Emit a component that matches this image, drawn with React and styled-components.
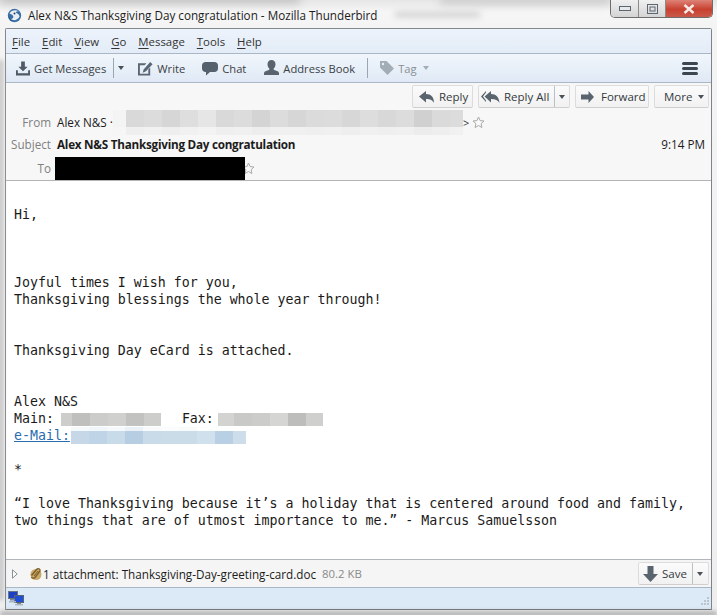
import React from "react";
import styled, { createGlobalStyle } from "styled-components";

const Global = createGlobalStyle`
  html, body { margin: 0; padding: 0; width: 717px; height: 615px; overflow: hidden; background: #f2f2f2; }
  #root { width: 717px; height: 615px; }
  * { box-sizing: border-box; }
  svg { flex: none; display: block; }
`;

const uiFont = `"Open Sans", "Noto Sans", "Liberation Sans", sans-serif`;

const Frame = styled.div`
  position: relative;
  width: 717px;
  height: 615px;
  overflow: hidden;
  display: flex;
  flex-direction: column;
  padding: 0 5px 5px 5px;
  background: linear-gradient(180deg, #e6e6e6 0, #f6f6f6 12px, #f4f4f4 28px, #eeeeee 100%);
  font-family: ${uiFont};
  color: #1e1e1e;
`;
const Smudge = styled.span`
  position: absolute;
  left: ${p => p.$x}px;
  top: ${p => p.$y}px;
  width: ${p => p.$w}px;
  height: ${p => p.$h}px;
  background: ${p => p.$c};
  filter: blur(${p => p.$b}px);
`;
const TitleBar = styled.div`
  position: relative;
  height: 28px;
  flex: none;
  display: flex;
  align-items: center;
  gap: 6px;
  padding: 2px 0 0 2px;
`;
const TitleText = styled.div`
  font-size: 11.7px;
  line-height: 17px;
  color: #1c1c1c;
  white-space: nowrap;
`;
const Controls = styled.div`
  position: absolute;
  right: -1px;
  top: 0;
  display: flex;
  height: 18px;
  border: 1px solid #6c6c6c;
  border-top: none;
  border-radius: 0 0 5px 5px;
  overflow: hidden;
`;
const Ctl = styled.div`
  width: ${p => p.$w}px;
  display: flex;
  align-items: center;
  justify-content: center;
  background: ${p => p.$bg};
  border-right: ${p => (p.$line ? "1px solid #8b8b8b" : "none")};
`;
const Window = styled.div`
  flex: 1;
  min-height: 0;
  display: flex;
  flex-direction: column;
  border: 1px solid #85898d;
  border-right-color: #7f8387;
  border-bottom-color: #60646a;
  border-radius: 2px 2px 0 0;
  background: #fff;
`;
const MenuBar = styled.div`
  height: 25px;
  flex: none;
  display: flex;
  align-items: center;
  padding-left: 6px;
  gap: 12px;
  background: linear-gradient(180deg, #edf3fb, #e3ecf7);
  border-bottom: 1px solid #a9b7c6;
  font-size: 11.4px;
`;
const MenuItem = styled.span`
  color: #333;
  u { text-underline-offset: 2px; text-decoration-thickness: 1px; }
`;
const Toolbar = styled.div`
  height: 29px;
  flex: none;
  display: flex;
  align-items: center;
  padding: 0 13px 0 9px;
  background: linear-gradient(180deg, #f1f6fc, #dfe9f5);
  border-bottom: 1px solid #a9b7c6;
  font-size: 11.2px;
  color: #3a3f45;
`;
const Tool = styled.div`
  display: flex;
  align-items: center;
  gap: 4px;
  margin-left: ${p => p.$ml || 0}px;
  color: ${p => (p.$dim ? "#8a8f95" : "#3a3f45")};
  white-space: nowrap;
`;
const Sep = styled.span`
  width: 1px;
  height: ${p => p.$h}px;
  background: #9aa7b3;
  margin-left: ${p => p.$ml}px;
  flex: none;
`;
const Caret = styled.span`
  width: 0;
  height: 0;
  flex: none;
  margin-left: ${p => p.$ml || 0}px;
  border-left: 3.5px solid transparent;
  border-right: 3.5px solid transparent;
  border-top: 4px solid ${p => p.$c || "#4a5158"};
`;
const Burger = styled.div`
  margin-left: auto;
  display: flex;
  flex-direction: column;
  gap: 2px;
  span { display: block; width: 16px; height: 3px; border-radius: 1.5px; background: #3c4650; }
`;
const Header = styled.div`
  height: 98px;
  flex: none;
  background: #f7f7f7;
  border-bottom: 1px solid #b4b4b4;
  position: relative;
`;
const Actions = styled.div`
  display: flex;
  justify-content: flex-end;
  gap: 5px;
  padding: 2px 2px 0 0;
  height: 26px;
`;
const Btn = styled.div`
  height: 23px;
  display: flex;
  align-items: center;
  width: ${p => p.$w}px;
  padding-left: ${p => p.$pl || 0}px;
  gap: ${p => p.$gap || 0}px;
  background: linear-gradient(180deg, #fbfbfb, #f1f1f1);
  border: 1px solid #dcdcdc;
  border-bottom-color: #cfcfcf;
  border-radius: 2px;
  font-size: 11.5px;
  color: #343a40;
  white-space: nowrap;
`;
const BtnSplit = styled.span`
  align-self: stretch;
  width: 1px;
  background: #b7c2c4;
  margin-left: ${p => p.$ml}px;
  flex: none;
`;
const MetaRow = styled.div`
  display: flex;
  align-items: center;
  height: ${p => p.$h}px;
  font-size: 11.7px;
  white-space: nowrap;
`;
const Label = styled.span`
  width: 45px;
  text-align: right;
  margin-right: 6px;
  padding-top: ${p => p.$pt || 0}px;
  color: #808080;
  flex: none;
`;
const Value = styled.span`
  font-weight: ${p => (p.$bold ? 700 : 400)};
  color: #1c1c1c;
  letter-spacing: ${p => (p.$bold ? "-0.25px" : "0")};
`;
const Time = styled.span`
  margin-left: auto;
  margin-right: 6px;
  color: #1c1c1c;
`;
const Cells = styled.span`
  display: flex;
  height: ${p => p.$h}px;
`;
const Cell = styled.span`
  display: block;
  height: 100%;
  width: ${p => p.$w}px;
  background: ${p => p.$c};
`;
const FromBlur = styled.div`
  position: absolute;
  left: 107px;
  top: 27px;
  display: flex;
  align-items: flex-start;
`;
const BlurStack = styled.div`
  display: flex;
  flex-direction: column;
`;
const FromTail = styled.div`
  display: flex;
  align-items: center;
  gap: 3px;
  height: 24px;
  font-size: 11px;
  color: #333;
`;
const Black = styled.div`
  width: 190px;
  height: 23px;
  margin: 3px 0 0 -2px;
  background: #000;
  flex: none;
  position: relative;
  z-index: 1;
`;
const ToStar = styled.span`
  margin-left: -3px;
  padding-top: 2px;
`;
const Body = styled.pre`
  flex: 1;
  min-height: 0;
  margin: 0;
  padding: 25px 0 0 8px;
  background: #fff;
  font-family: "DejaVu Sans Mono", "Liberation Mono", monospace;
  font-size: 13.28px;
  line-height: 17px;
  color: #1a1a1a;
  overflow: hidden;
`;
const BlurHolder = styled.span`
  display: inline-flex;
  flex-direction: column;
  vertical-align: top;
  height: 17px;
  padding-top: ${p => p.$pt || 0}px;
  margin-left: ${p => p.$ml || 0}px;
  margin-right: ${p => p.$mr || 0}px;
`;
const MailLink = styled.span`
  color: #2a6cb0;
  text-decoration: underline;
`;
const AttachBar = styled.div`
  height: 29px;
  flex: none;
  display: flex;
  align-items: center;
  padding: 0 2px 0 6px;
  background: #f5f5f5;
  border-top: 1px solid #b0b6bb;
  border-bottom: 1px solid #a9b7c6;
  font-size: 11.7px;
`;
const AttachSize = styled.span`
  color: #8a8a8a;
  margin-left: 6px;
  font-size: 11.4px;
`;
const SaveWrap = styled.div`
  margin-left: auto;
`;
const Status = styled.div`
  height: 21px;
  flex: none;
  display: flex;
  align-items: center;
  justify-content: space-between;
  padding: 0 0 0 2px;
  background: #dce9f6;
`;
const Grip = styled.div`
  align-self: flex-end;
  margin-bottom: 1px;
  margin-right: 1px;
  display: flex;
`;

const fromTop = ["#f4f4f4","#d9d9d9","#dcdcdc","#d6d6d6","#dedede","#e6e6e6","#d9d9d9","#dcdcdc","#d4d4d4","#dcdcdc","#d6d6d6","#dbdbdb","#dcdcdc","#d7d7d7","#dddddd","#d8d8d8","#dcdcdc","#d0d0d0","#dadada","#dcdcdc"];
const fromBottom = ["#f6f6f6","#efefef","#f1f1f1","#eeeeee","#f1f1f1","#f3f3f3","#efefef","#f0f0f0","#ededed","#f0f0f0","#f0f0f0","#efefef","#f0f0f0","#eeeeee","#f0f0f0","#efefef","#f0f0f0","#ececec","#eeeeee","#f1f1f1"];
const mainCells = ["#cdcdcb","#bfbfbd","#ccccca","#d0d0ce","#c2c2c0","#cdcdcb"];
const faxCells = ["#d3d3d1","#c9c9c7","#cccccb","#d5d5d3","#bdbdbb","#cfcfcd"];
const mailCells = ["#c6d8e8","#bfd4e6","#c8dbe9","#b7cee2","#c9dbe8","#cbdce9","#cbdce9","#d0e0ec","#b9d0e4","#cddeea"];
const mailFaint = ["#f6f9fc","#f1f6fa","#f6f9fc","#eaf1f7","#f8fafc","#fbfcfd","#f8fafc","#fdfefe","#fdfefe","#ffffff"];

function Blur({ colors, first, last, h }) {
  return (
    <Cells $h={h}>
      {colors.map((c, i) => (
        <Cell key={i} $c={c} $w={i === 0 ? first : i === colors.length - 1 ? last : 18} />
      ))}
    </Cells>
  );
}

const Bird = () => (
  <svg width="15" height="15" viewBox="0 0 18 17">
    <circle cx="9" cy="8.5" r="8" fill="#3a6ea5" />
    <path d="M3 6C5 2.5 10 1 14 3.5c-2 0-3 .6-3.5 1.6 2 .4 4 1.8 4.6 4.4-1.6 4.6-7.6 6.2-11 3C6 13 8 11.5 7.6 9.4 6.8 7.4 4.8 6.6 3 6z" fill="#e9eef3" />
    <circle cx="9" cy="6.2" r="1.2" fill="#23405f" />
    <path d="M2 9c1 3 3 5.5 6.5 6-3.5.6-7-2.5-6.5-6z" fill="#1f4c7e" />
  </svg>
);
const GetIcon = () => (
  <svg width="14" height="15" viewBox="0 0 15 15" fill="#4f5a66">
    <path d="M5.5 0h4v5.500h3L7.500 10.500 2.500 5.500h3z" />
    <path d="M0 9.500h2v3h11v-3h2V15H0z" />
  </svg>
);
const WriteIcon = () => (
  <svg width="15" height="15" viewBox="0 0 16 15" fill="#5a6672">
    <path d="M0 2h9L7 4H2v9h9V8.500l2-2V15H0z" />
    <path d="M13 .5l2.500 2.500-7 7.500L5 12l1-3.500z" />
  </svg>
);
const ChatIcon = () => (
  <svg width="16" height="15" viewBox="0 0 16 15" fill="#55626e">
    <path d="M3.500 1h9C14.500 1 16 2.300 16 4.500v3C16 9.700 14.500 11 12.500 11H8l-4 3.500V11h-.5C1.500 11 0 9.700 0 7.500v-3C0 2.300 1.500 1 3.500 1z" />
  </svg>
);
const BookIcon = () => (
  <svg width="15" height="16" viewBox="0 0 15 16" fill="#59646f">
    <path d="M7.500 0C10 0 11.500 1.800 11.500 4.300c0 1.800-.8 3.300-1.800 4.200v1.300l3.800 1.500c1 .4 1.500 1.200 1.500 2.200V15H0v-1.500c0-1 .5-1.800 1.500-2.200l3.800-1.500V8.500C4.300 7.600 3.500 6.100 3.500 4.300 3.500 1.800 5 0 7.500 0z" />
  </svg>
);
const TagIcon = () => (
  <svg width="14" height="14" viewBox="0 0 14 14" fill="#a3adb6">
    <path d="M0 0h6.500L14 7.500 7.500 14 0 6.500z" />
    <circle cx="3" cy="3" r="1.200" fill="#e8eff7" />
  </svg>
);
const ReplyIcon = () => (
  <svg width="15" height="14" viewBox="0 0 15 14" fill="#59646f">
    <path d="M7 1v3c5 0 8 3 8 9-1.500-2.800-3.500-4-8-4v3.500L0 6.500z" />
  </svg>
);
const ReplyAllIcon = () => (
  <svg width="19" height="14" viewBox="0 0 19 14" fill="#59646f">
    <path d="M5 1v1.500L2 6.500l3 4V12L0 6.500z" />
    <path d="M10 1v3c5 0 8 3 8.500 9-1.500-2.800-4-4-8.500-4v3.500L3.500 6.500z" />
  </svg>
);
const ForwardIcon = () => (
  <svg width="13" height="12" viewBox="0 0 13 12" fill="#59646f">
    <path d="M7.500 0L13 6l-5.500 6V8.500H0v-5h7.500z" />
  </svg>
);
const SaveIcon = () => (
  <svg width="15" height="16" viewBox="0 0 15 16" fill="#59646f">
    <path d="M4.500 0h6v8H15l-7.500 8L0 8h4.500z" />
  </svg>
);
const StarIcon = ({ size = 13 }) => (
  <svg width={size} height={size} viewBox="0 0 13 13" fill="#fafafa" stroke="#a9a9a9" strokeWidth="1">
    <path d="M6.500 1l1.600 3.600 3.900.4-2.900 2.600.8 3.900-3.400-2-3.400 2 .8-3.900L1 5l3.900-.4z" />
  </svg>
);
const ClipIcon = () => (
  <svg width="14" height="14" viewBox="0 0 14 14">
    <circle cx="7" cy="7.500" r="5.500" fill="#c9a86b" />
    <path d="M2.500 8.500l5-6c1.500-1.500 4-.5 3.500 1.500l-5 6.500c-1 1-3 1-3.500-.5" fill="none" stroke="#7c5c22" strokeWidth="1.300" />
    <path d="M5 9l4-5" fill="none" stroke="#7c5c22" strokeWidth="1" />
  </svg>
);
const TwistyIcon = () => (
  <svg width="6" height="10" viewBox="0 0 6 10">
    <path d="M.5.8L5.200 5 .5 9.200z" fill="#fbfbfb" stroke="#8a8f94" />
  </svg>
);
const NetIcon = () => (
  <svg width="16" height="15" viewBox="0 0 16 15">
    <rect x="0.500" y="0.500" width="9" height="7" fill="#1d3fc4" stroke="#6a7480" />
    <rect x="6.500" y="4.500" width="9" height="7" fill="#1f4fd8" stroke="#5a646e" />
    <rect x="2" y="8" width="5" height="1.500" fill="#7d8791" />
    <rect x="9" y="12" width="4" height="1" fill="#7d8791" />
    <rect x="7" y="13" width="8" height="1.500" fill="#aeb6bd" />
    <rect x="1" y="10" width="7" height="1.500" fill="#aeb6bd" />
  </svg>
);
const GripIcon = () => (
  <svg width="12" height="12" viewBox="0 0 12 12" fill="#b9c4ce">
    <rect x="9" y="1" width="2" height="2" />
    <rect x="6" y="4" width="2" height="2" />
    <rect x="9" y="4" width="2" height="2" />
    <rect x="3" y="7" width="2" height="2" />
    <rect x="6" y="7" width="2" height="2" />
    <rect x="9" y="7" width="2" height="2" />
  </svg>
);

const menus = [["F", "ile"], ["E", "dit"], ["V", "iew"], ["G", "o"], ["M", "essage"], ["T", "ools"], ["H", "elp"]];

export default function App() {
  return (
    <Frame>
      <Global />
      <Smudge $x={0} $y={-6} $w={300} $h={9} $c="#bdbdbd" $b={5} />
      <Smudge $x={440} $y={-4} $w={170} $h={8} $c="#c9c9c9" $b={4} />
      <Smudge $x={395} $y={12} $w={85} $h={5} $c="#cdcdcd" $b={3} />
      <Smudge $x={-1} $y={60} $w={4} $h={540} $c="#bcbcbc" $b={2} />
      <Smudge $x={0} $y={611} $w={717} $h={6} $c="#b5b5b5" $b={2} />
      <TitleBar>
        <Bird />
        <TitleText>Alex N&amp;S Thanksgiving Day congratulation - Mozilla Thunderbird</TitleText>
        <Controls>
          <Ctl $w={28} $bg="linear-gradient(180deg,#f0f0f0,#d4d4d4)" $line>
            <svg width="12" height="6" viewBox="0 0 12 6"><rect x="0.500" y="0.500" width="11" height="4" fill="#e8e8e8" stroke="#5c6670" /></svg>
          </Ctl>
          <Ctl $w={27} $bg="linear-gradient(180deg,#f0f0f0,#d4d4d4)" $line>
            <svg width="11" height="10" viewBox="0 0 11 10"><rect x="0.500" y="0.500" width="10" height="9" fill="none" stroke="#5c6670" /><rect x="3" y="3" width="5" height="4" fill="none" stroke="#5c6670" /></svg>
          </Ctl>
          <Ctl $w={46} $bg="linear-gradient(180deg,#dd8377,#c8402f 55%,#c9594a)">
            <svg width="12" height="10" viewBox="0 0 12 10"><path d="M1.500 1l9 8M10.500 1l-9 8" stroke="#f6e9e5" strokeWidth="2.400" /></svg>
          </Ctl>
        </Controls>
      </TitleBar>
      <Window>
        <MenuBar>
          {menus.map(([k, rest]) => (
            <MenuItem key={k}><u>{k}</u>{rest}</MenuItem>
          ))}
        </MenuBar>
        <Toolbar>
          <Tool $ml={1}><GetIcon />Get Messages</Tool>
          <Sep $h={20} $ml={7} />
          <Caret $ml={4} />
          <Tool $ml={14}><WriteIcon />Write</Tool>
          <Tool $ml={17}><ChatIcon />Chat</Tool>
          <Tool $ml={18}><BookIcon />Address Book</Tool>
          <Sep $h={20} $ml={12} />
          <Tool $ml={12} $dim><TagIcon />Tag<Caret $ml={2} $c="#a3adb6" /></Tool>
          <Burger><span /><span /><span /></Burger>
        </Toolbar>
        <Header>
          <Actions>
            <Btn $w={61} $pl={6} $gap={5}><ReplyIcon />Reply</Btn>
            <Btn $w={92} $pl={2} $gap={4}><ReplyAllIcon />Reply All<BtnSplit $ml={1} /><Caret /></Btn>
            <Btn $w={74} $pl={5} $gap={7}><ForwardIcon />Forward</Btn>
            <Btn $w={55} $pl={9} $gap={6}>More<Caret /></Btn>
          </Actions>
          <MetaRow $h={25}>
            <Label>From</Label>
            <Value>Alex N&amp;S ·</Value>
          </MetaRow>
          <FromBlur>
            <BlurStack>
              <Blur colors={fromTop} first={13} last={13} h={17} />
              <Blur colors={fromBottom} first={13} last={13} h={8} />
            </BlurStack>
            <FromTail>&gt;<StarIcon /></FromTail>
          </FromBlur>
          <MetaRow $h={20}>
            <Label>Subject</Label>
            <Value $bold>Alex N&amp;S Thanksgiving Day congratulation</Value>
            <Time>9:14 PM</Time>
          </MetaRow>
          <MetaRow $h={26}>
            <Label $pt={2}>To</Label>
            <Black />
            <ToStar><StarIcon /></ToStar>
          </MetaRow>
        </Header>
        <Body>{`Hi,



Joyful times I wish for you,
Thanksgiving blessings the whole year through!


Thanksgiving Day eCard is attached.


Alex N&S
Main: `}<BlurHolder $pt={3} $ml={-1} $mr={-3}><Blur colors={mainCells} first={11} last={17} h={13} /></BlurHolder>{`   Fax: `}<BlurHolder $pt={3} $ml={-4}><Blur colors={faxCells} first={16} last={17} h={13} /></BlurHolder>{`
`}<MailLink>e-Mail:</MailLink><BlurHolder $ml={1}><Blur colors={mailFaint} first={18} last={13} h={5} /><Blur colors={mailCells} first={18} last={13} h={14} /></BlurHolder>{`

*

“I love Thanksgiving because it’s a holiday that is centered around food and family,
two things that are of utmost importance to me.” - Marcus Samuelsson`}</Body>
        <AttachBar>
          <TwistyIcon />
          <Tool $ml={11}><ClipIcon /></Tool>
          <Value>1 attachment: Thanksgiving-Day-greeting-card.doc</Value>
          <AttachSize>80.2 KB</AttachSize>
          <SaveWrap>
            <Btn $w={71} $pl={4} $gap={4}><SaveIcon />Save<BtnSplit $ml={1} /><Caret /></Btn>
          </SaveWrap>
        </AttachBar>
        <Status>
          <NetIcon />
          <Grip><GripIcon /></Grip>
        </Status>
      </Window>
    </Frame>
  );
}
